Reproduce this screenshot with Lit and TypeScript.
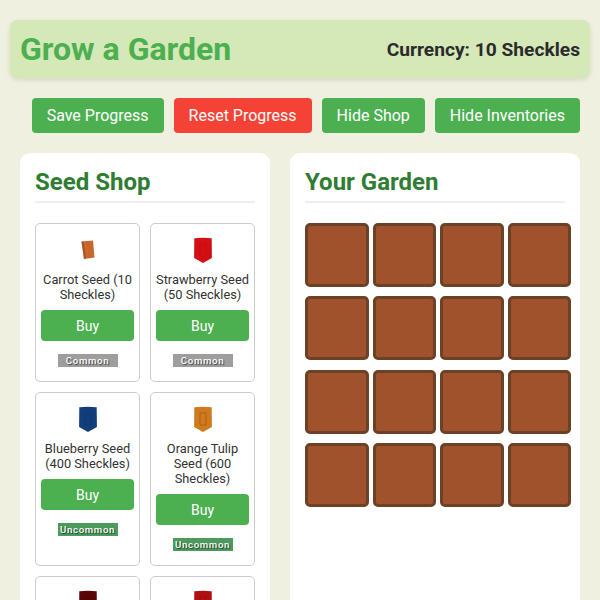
import { LitElement, html, css, svg } from "lit";
import { customElement } from "lit/decorators.js";

const SHIELD = "M0.3 1.3 Q9 0 17.7 1.3 L17.9 21 L9 26 L0.1 21 Z";

interface Seed { name?: string; rarity?: string; color: string; dark: string; carrot?: boolean; detail: number; }

const SEEDS: Seed[] = [
  { name: "Carrot Seed (10 Sheckles)", rarity: "Common", color: "#c8682a", dark: "#8f4a1c", carrot: true, detail: 0.6 },
  { name: "Strawberry Seed (50 Sheckles)", rarity: "Common", color: "#d40f14", dark: "#a80c10", detail: 0.35 },
  { name: "Blueberry Seed (400 Sheckles)", rarity: "Uncommon", color: "#123f7c", dark: "#0c2c58", detail: 0.4 },
  { name: "Orange Tulip Seed (600 Sheckles)", rarity: "Uncommon", color: "#cf7a1e", dark: "#94540f", detail: 0.6 },
  { color: "#5a0508", dark: "#3c0305", detail: 0.4 },
  { color: "#b01010", dark: "#8a0c0c", detail: 0.4 },
];

@customElement("app-root")
export class AppRoot extends LitElement {
  static styles = css`
    :host {
      display: block;
      height: 600px;
      overflow: hidden;
      background: #f0f0e0;
      font-family: Roboto, "Liberation Sans", sans-serif;
      color: #333;
      box-sizing: border-box;
      padding: 20px 10px 0;
    }
    header {
      display: flex;
      justify-content: space-between;
      align-items: center;
      height: 58px;
      box-sizing: border-box;
      padding: 0 10px;
      background: #d4e8b8;
      border-radius: 8px;
      box-shadow: 0 2px 5px rgba(0, 0, 0, 0.1);
    }
    h1 { margin: 0; font-size: 32px; font-weight: 700; color: #4caf50; }
    .currency { font-size: 19.2px; font-weight: 700; color: #2b2b2b; }
    .actions {
      display: flex;
      justify-content: flex-end;
      gap: 10px;
      margin: 20px 10px 20px 0;
    }
    .actions button {
      height: 35px;
      padding: 0 15px;
      border: 0;
      border-radius: 4px;
      background: #4caf50;
      color: #fff;
      font: 400 16px Roboto, sans-serif;
    }
    .actions button.danger { background: #f44336; }
    .columns {
      display: flex;
      gap: 20px;
      padding: 0 10px;
    }
    .panel {
      background: #fff;
      border-radius: 10px;
      padding: 15px;
      box-sizing: border-box;
      height: 700px;
    }
    .shop { width: 250px; }
    .garden { width: 290px; }
    h2 {
      margin: 0 0 20px;
      padding-bottom: 5px;
      height: 28px;
      line-height: 28px;
      box-sizing: content-box;
      font-size: 24px;
      font-weight: 700;
      color: #2e7d32;
      border-bottom: 2px solid #eee;
    }
    .seeds {
      display: grid;
      grid-template-columns: 105px 105px;
      gap: 10px;
    }
    .card {
      border: 1px solid #ccc;
      border-radius: 5px;
      padding: 5px;
      text-align: center;
      font-size: 12.8px;
      line-height: 15px;
      color: #333;
    }
    .icon {
      height: 42px;
      display: flex;
      align-items: center;
      justify-content: center;
    }
    .name { margin-top: 1px; }
    .buy {
      display: block;
      width: 100%;
      height: 31px;
      margin-top: 8px;
      border: 0;
      border-radius: 4px;
      background: #4caf50;
      color: #fff;
      font: 400 14px Roboto, sans-serif;
    }
    .badge {
      display: block;
      width: 60px;
      height: 13px;
      margin: 13px auto 9px;
      font-size: 9.6px;
      line-height: 13px;
      font-weight: 500;
      letter-spacing: 0.7px;
      color: #fff;
      text-shadow: 1px 1px 1px rgba(0, 0, 0, 0.6);
    }
    .badge.Common { background: #9e9e9e; }
    .badge.Uncommon { background: #4c9a5c; }
    .plots {
      display: grid;
      grid-template-columns: repeat(4, 63.5px);
      grid-auto-rows: 64px;
      column-gap: 4.1px;
      row-gap: 9.4px;
    }
    .plot {
      box-sizing: border-box;
      background: #a0522d;
      border: 3px solid #6b4226;
      border-radius: 5px;
    }
  `;

  private icon(s: Seed) {
    if (s.carrot) {
      return html`<svg width="14" height="20" viewBox="0 0 14 20">${svg`
        <path d="M0.5 1.5 L12 0.5 L13.5 17.5 L3 19 Z" fill=${s.color}/>
        <path d="M0.5 1.5 L2.5 1.3 L5 18.7 L3 19 Z" fill=${s.dark} opacity=${s.detail}/>`}</svg>`;
    }
    return html`<svg width="18" height="26" viewBox="0 0 18 26">${svg`
      <path d=${SHIELD} fill=${s.color}/>
      <path d="M6 7 H12 V19 H6 Z" fill="none" stroke=${s.dark} stroke-width="1" opacity=${s.detail}/>`}</svg>`;
  }

  render() {
    return html`
      <header>
        <h1>Grow a Garden</h1>
        <div class="currency">Currency: 10 Sheckles</div>
      </header>
      <div class="actions">
        <button>Save Progress</button>
        <button class="danger">Reset Progress</button>
        <button>Hide Shop</button>
        <button>Hide Inventories</button>
      </div>
      <div class="columns">
        <section class="panel shop">
          <h2>Seed Shop</h2>
          <div class="seeds">
            ${SEEDS.map(
              (s) => html`
                <div class="card">
                  <div class="icon">${this.icon(s)}</div>
                  ${s.name
                    ? html`
                        <div class="name">${s.name}</div>
                        <button class="buy">Buy</button>
                        <span class="badge ${s.rarity}">${s.rarity}</span>
                      `
                    : ""}
                </div>
              `
            )}
          </div>
        </section>
        <section class="panel garden">
          <h2>Your Garden</h2>
          <div class="plots">
            ${Array.from({ length: 16 }, () => html`<div class="plot"></div>`)}
          </div>
        </section>
      </div>
    `;
  }
}
